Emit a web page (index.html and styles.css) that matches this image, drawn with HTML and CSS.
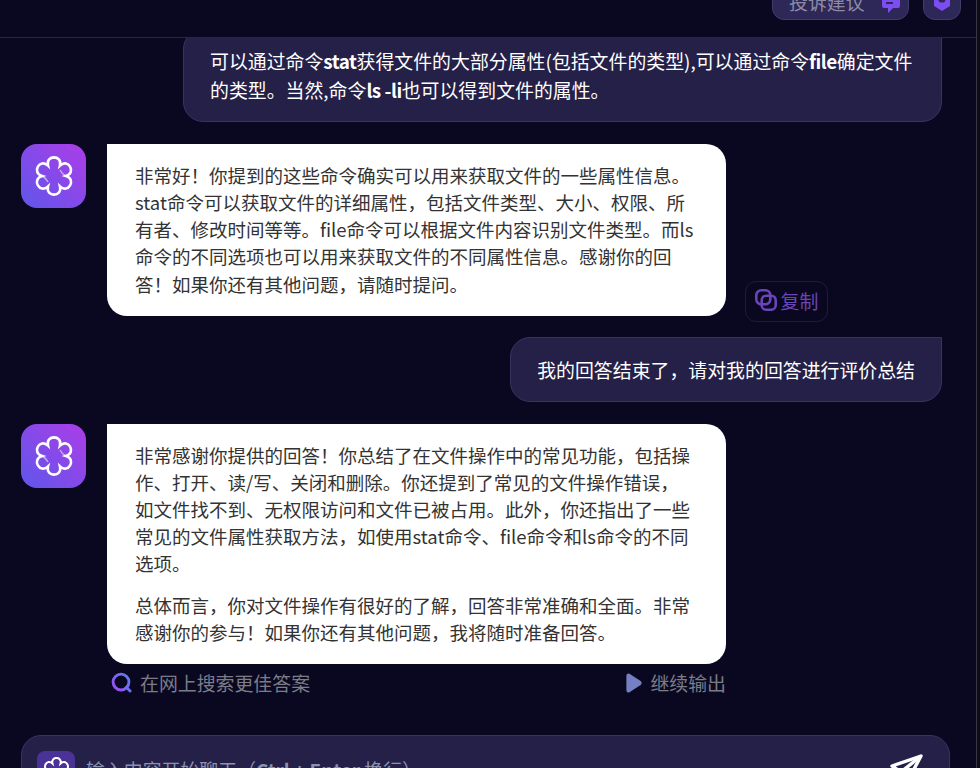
FILE: index.html
```html
<!DOCTYPE html>
<html lang="zh-CN">
<head>
<meta charset="utf-8">
<title>聊天</title>
<link rel="stylesheet" href="styles.css">
</head>
<body>
<div class="app">
  <header class="topbar">
    <button class="top-btn top-btn-wide">
      <span>投诉建议</span>
      <svg class="top-icon top-icon-low" viewBox="0 0 20 20"><path d="M3 0H17Q19 0 19 2V11Q19 13 17 13H12L7 18V13H3Q1 13 1 11V2Q1 0 3 0Z" fill="#7c4df0"/><path d="M5 4H15M5 8H12" stroke="#2d2857" stroke-width="2"/></svg>
    </button>
    <button class="top-btn top-btn-square">
      <svg class="top-icon" viewBox="0 0 20 20"><path d="M10 0L18 4V14L10 19L2 14V4Z" fill="#7c4df0"/><circle cx="10" cy="7" r="3.6" fill="#2d2857"/></svg>
    </button>
  </header>

  <main class="chat">
    <div class="row row-user">
      <div class="bubble-user">可以通过命令<b class="latin">stat</b>获得文件的大部分属性(包括文件的类型),可以通过命令<b class="latin">file</b>确定文件的类型。当然,命令<b class="latin">ls -li</b>也可以得到文件的属性。</div>
    </div>

    <div class="row row-bot">
      <div class="avatar"><svg class="flower" viewBox="0 0 40 40"><path d="M14 9.61C11.38 -1.33 28.62 -1.33 26 9.61C34.16 1.88 42.78 16.8 32 20C42.78 23.2 34.16 38.12 26 30.39C28.62 41.33 11.38 41.33 14 30.39C5.84 38.12 -2.78 23.2 8 20C-2.78 16.8 5.84 1.88 14 9.61Z"/><path class="swirl" d="M32 20Q28 18 26 14M8 20Q12 22 14 26"/></svg></div>
      <div class="bubble-bot">
        <p>非常好！你提到的这些命令确实可以用来获取文件的一些属性信息。stat命令可以获取文件的详细属性，包括文件类型、大小、权限、所有者、修改时间等等。file命令可以根据文件内容识别文件类型。而ls命令的不同选项也可以用来获取文件的不同属性信息。感谢你的回答！如果你还有其他问题，请随时提问。</p>
      </div>
      <button class="copy">
        <svg class="copy-icon" viewBox="0 0 22 22"><rect x="1.3" y="1.3" width="14" height="14" rx="5"/><rect x="6.7" y="6.7" width="14" height="14" rx="4.5"/></svg>
        <span>复制</span>
      </button>
    </div>

    <div class="row row-user">
      <div class="bubble-user">我的回答结束了，请对我的回答进行评价总结</div>
    </div>

    <div class="row row-bot">
      <div class="avatar"><svg class="flower" viewBox="0 0 40 40"><path d="M14 9.61C11.38 -1.33 28.62 -1.33 26 9.61C34.16 1.88 42.78 16.8 32 20C42.78 23.2 34.16 38.12 26 30.39C28.62 41.33 11.38 41.33 14 30.39C5.84 38.12 -2.78 23.2 8 20C-2.78 16.8 5.84 1.88 14 9.61Z"/><path class="swirl" d="M32 20Q28 18 26 14M8 20Q12 22 14 26"/></svg></div>
      <div class="bot-col">
        <div class="bubble-bot">
          <p>非常感谢你提供的回答！你总结了在文件操作中的常见功能，包括操作、打开、读/写、关闭和删除。你还提到了常见的文件操作错误，如文件找不到、无权限访问和文件已被占用。此外，你还指出了一些常见的文件属性获取方法，如使用stat命令、file命令和ls命令的不同<span class="keep">选项。</span></p>
          <p>总体而言，你对文件操作有很好的了解，回答非常准确和全面。非常感谢你的参与！如果你还有其他问题，我将随时准备回答。</p>
        </div>
        <div class="actions">
          <span class="action">
            <svg class="action-icon" viewBox="0 0 22 22"><defs><linearGradient id="sg" x1="0" y1="1" x2="1" y2="0"><stop offset="0" stop-color="#a04af0"/><stop offset="1" stop-color="#5a80f0"/></linearGradient></defs><circle cx="10.5" cy="10.5" r="8.3" fill="none" stroke="url(#sg)" stroke-width="3"/><path d="M16 16L20 20" stroke="#6a70f0" stroke-width="3" stroke-linecap="round"/></svg>
            <span>在网上搜索更佳答案</span>
          </span>
          <span class="action">
            <svg class="play-icon" viewBox="0 0 16 20"><path d="M3.5 0.8L14.6 8Q16.6 10 14.6 12L3.5 19.2Q0.4 20.4 0.4 17V3Q0.4 -0.4 3.5 0.8Z" fill="#7580c4"/></svg>
            <span>继续输出</span>
          </span>
        </div>
      </div>
    </div>
  </main>

  <footer class="footer">
    <div class="composer">
      <span class="composer-logo"><svg class="flower flower-small" viewBox="0 0 40 40"><path d="M14 9.61C11.38 -1.33 28.62 -1.33 26 9.61C34.16 1.88 42.78 16.8 32 20C42.78 23.2 34.16 38.12 26 30.39C28.62 41.33 11.38 41.33 14 30.39C5.84 38.12 -2.78 23.2 8 20C-2.78 16.8 5.84 1.88 14 9.61Z"/></svg></span>
      <span class="placeholder">输入内容开始聊天（<b class="placeholder-keys">Ctrl + Enter</b> 换行）</span>
      <svg class="send" viewBox="0 0 34 34"><path d="M31 2L2 12L11 18L16 30Z" /><path d="M31 2L11 18"/></svg>
    </div>
  </footer>
</div>
</body>
</html>
```

FILE: styles.css
```css
* { box-sizing: border-box; }

html, body {
  height: 100%;
  margin: 0;
  overflow: hidden;
}

body {
  background: #0e0d14;
  padding-right: 3px;
  font-family: "Noto Sans CJK SC", "Noto Sans", sans-serif;
}

.app {
  display: flex;
  flex-direction: column;
  height: 768px;
  overflow: hidden;
  background: #0a0820;
  border-right: 1px solid #37354a;
}

/* top bar, scrolled so the buttons are cut by the window */
.topbar {
  flex: none;
  height: 38px;
  display: flex;
  justify-content: flex-end;
  align-items: flex-end;
  gap: 14px;
  padding: 0 15px 17px 0;
  border-bottom: 1px solid #282640;
  overflow: hidden;
}

.top-btn {
  flex: none;
  display: flex;
  align-items: center;
  justify-content: center;
  height: 37px;
  padding: 0;
  font: inherit;
  background: #2d2857;
  border: 1px solid #3f3a68;
  border-radius: 12px;
  color: #8e8aa6;
  font-size: 18.9px;
}

.top-btn-wide { width: 137px; gap: 16px; justify-content: flex-start; padding-left: 16px; }
.top-btn-square { width: 38px; }
.top-icon { width: 20px; height: 20px; display: block; }
.top-icon-low { margin-top: 7px; }

/* conversation, anchored to the bottom */
.chat {
  flex: 1;
  min-height: 0;
  display: flex;
  flex-direction: column;
  justify-content: flex-end;
  overflow: hidden;
  padding: 0 34px 0 21px;
  gap: 21.4px;
}

.row { flex: none; display: flex; }
.row-user { justify-content: flex-end; }
.row-bot { align-items: flex-start; gap: 21px; }

.bubble-user {
  background: #252048;
  border: 1px solid #39335f;
  border-radius: 20px 0 20px 20px;
  padding: 17.3px 26px;
  color: #fff;
  font-size: 18.9px;
  line-height: 28.35px;
  max-width: 759px;
}

.latin { font-weight: 700; letter-spacing: -0.5px; }
.keep { white-space: nowrap; }

.avatar {
  flex: none;
  width: 65px;
  height: 64px;
  border-radius: 16px;
  background: linear-gradient(45deg, #5f56ea, #ad3de8);
  display: flex;
  align-items: center;
  justify-content: center;
}

.flower {
  width: 40px;
  height: 40px;
  fill: none;
  stroke: #fff;
  stroke-width: 2.6;
}

.swirl { stroke-width: 1.4; opacity: 0.55; }

.bubble-bot {
  flex: none;
  width: 619px;
  background: #fff;
  color: #333;
  border-radius: 0 20px 20px 20px;
  padding: 18px 30px 18px 28px;
  font-size: 18.5px;
  line-height: 27.2px;
}

.bubble-bot p { margin: 0; }
.bubble-bot p + p { margin-top: 14px; }

.copy {
  flex: none;
  align-self: flex-end;
  margin: 0 0 -6px -2px;
  width: 83px;
  height: 41px;
  display: flex;
  align-items: center;
  justify-content: center;
  gap: 4px;
  padding: 0 0 2px;
  font: inherit;
  font-size: 18.9px;
  color: #6a45b8;
  background: transparent;
  border: 1px solid #1f1c36;
  border-radius: 11px;
}

.copy-icon {
  width: 22px;
  height: 22px;
  fill: none;
  stroke: #6a45b8;
  stroke-width: 2.6;
}

.bot-col {
  flex: none;
  width: 619px;
  display: flex;
  flex-direction: column;
}

.actions {
  display: flex;
  justify-content: space-between;
  align-items: center;
  padding: 0 0 0 4px;
  height: 37px;
}

.action {
  display: flex;
  align-items: center;
  gap: 8px;
  color: #7c7c88;
  font-size: 18.9px;
  line-height: 28px;
}

.action-icon { width: 21px; height: 21px; }
.play-icon { width: 16px; height: 20px; }

/* composer, cut by the bottom of the window */
.footer {
  flex: none;
  height: 33px;
  margin-top: 34px;
  padding: 0 26px 0 21px;
  overflow: hidden;
}

.composer {
  height: 70px;
  display: flex;
  align-items: flex-start;
  background: #252048;
  border: 1px solid #39335f;
  border-radius: 20px;
  padding: 15px 25px 0 15px;
}

.composer-logo {
  flex: none;
  width: 38px;
  height: 38px;
  border-radius: 8px;
  background: #4a3296;
  display: flex;
  align-items: center;
  justify-content: center;
}

.flower-small { width: 27px; height: 27px; stroke-width: 3; }

.placeholder {
  flex: 1;
  margin-left: 11px;
  color: #8a92b0;
  font-size: 18.9px;
  line-height: 38px;
}

.placeholder-keys { font-weight: 700; }

.send {
  flex: none;
  width: 34px;
  height: 34px;
  margin-top: 3px;
  fill: none;
  stroke: #fff;
  stroke-width: 3.4;
  stroke-linejoin: round;
}
```
